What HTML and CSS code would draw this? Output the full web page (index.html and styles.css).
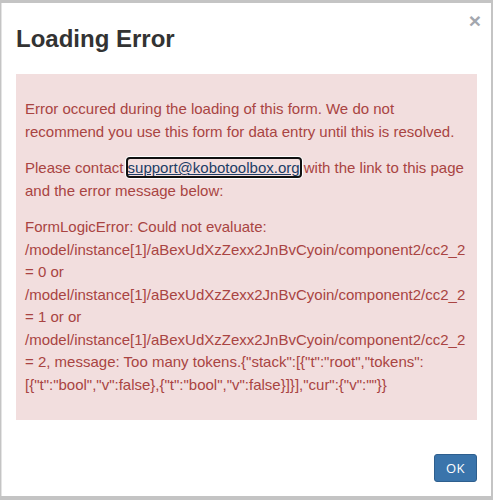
FILE: index.html
```html
<!DOCTYPE html>
<html>
<head>
<meta charset="utf-8">
<link rel="stylesheet" href="styles.css">
</head>
<body>
<div class="dialog">
  <span class="close">×</span>
  <h1 class="title">Loading Error</h1>
  <div class="alert">
    <p>Error occured during the loading of this form. We do not recommend you use this form for data entry until this is resolved.</p>
    <p>Please contact <a class="link" href="#">support@kobotoolbox.org</a> with the link to this page and the error message below:</p>
    <p>FormLogicError: Could not evaluate: /model/instance[1]/aBexUdXzZexx2JnBvCyoin/component2/cc2_2 = 0 or /model/instance[1]/aBexUdXzZexx2JnBvCyoin/component2/cc2_2 = 1 or or /model/instance[1]/aBexUdXzZexx2JnBvCyoin/component2/cc2_2 = 2, message: Too many tokens.{"stack":[{"t":"root","tokens":[{"t":"bool","v":false},{"t":"bool","v":false}]}],"cur":{"v":""}}</p>
  </div>
  <div class="footer">
    <button class="ok">OK</button>
  </div>
</div>
</body>
</html>
```
FILE: styles.css
```css
html, body {
  margin: 0;
  padding: 0;
  background: #c4c4c4;
  height: 100%;
}
body {
  font-family: "Liberation Sans", Arial, sans-serif;
  overflow: hidden;
}
.dialog {
  position: relative;
  box-sizing: border-box;
  margin: 3px 2px 0 1px;
  height: 493px;
  background: #fff;
  border-left: 1px solid #e4e4e4;
  padding: 0 14px;
  display: flex;
  flex-direction: column;
}
.close {
  position: absolute;
  top: 7px;
  right: 10px;
  font-size: 21px;
  font-weight: bold;
  line-height: 1;
  color: #a3a7ae;
}
.title {
  margin: 23px 0 0 0;
  font-size: 24px;
  line-height: 26.4px;
  font-weight: bold;
  color: #333;
}
.alert {
  margin-top: 22px;
  background: #f2dede;
  color: #a94442;
  padding: 10px 9px;
  font-size: 15px;
  line-height: 22.5px;
}
.alert p {
  margin: 14px 0;
}
.link {
  color: #1c3d66;
  text-decoration: underline;
  border-radius: 2px;
  outline: 2px solid #111;
  box-shadow: 0 0 0 3px #fff;
}
.footer {
  display: flex;
  justify-content: flex-end;
  margin-top: 34px;
}
.ok {
  width: 43px;
  height: 28px;
  background: #3a74ab;
  border: 1px solid #2e5f8e;
  border-radius: 3px;
  color: #fff;
  font-family: "Open Sans", "Liberation Sans", sans-serif;
  font-size: 13px;
  letter-spacing: 0.5px;
  padding: 0;
}
```
